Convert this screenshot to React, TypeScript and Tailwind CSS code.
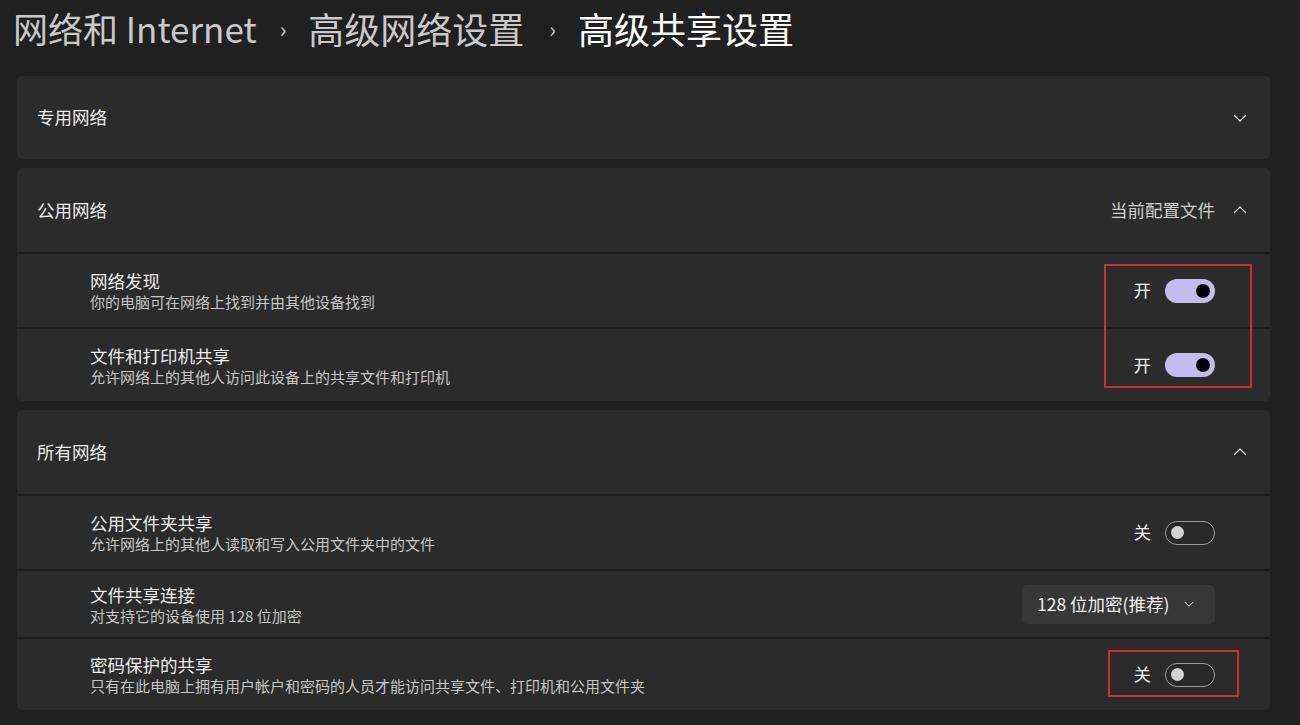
import React from "react";

const font = { fontFamily: '"Noto Sans CJK SC", "Noto Sans", sans-serif' };

function Chevron({ up = false, small = false }: { up?: boolean; small?: boolean }) {
  const s = small ? 12 : 16;
  return (
    <svg width={s} height={s} viewBox="0 0 16 16" fill="none" className="text-[#e8e8e8]">
      <path
        d={up ? "M2.5 10.5 L8 5 L13.5 10.5" : "M2.5 5.5 L8 11 L13.5 5.5"}
        stroke="currentColor"
        strokeWidth={small ? 1.3 : 1.2}
        strokeLinecap="round"
        strokeLinejoin="round"
      />
    </svg>
  );
}

function Toggle({ on }: { on: boolean }) {
  return (
    <div className="flex items-center gap-[14px]">
      <span className="text-[17.5px] text-[#f0f0f0]">{on ? "开" : "关"}</span>
      {on ? (
        <div className="w-[50px] h-[24px] rounded-full bg-[#c4bcee] flex items-center justify-end pr-[5px]">
          <div className="w-[14px] h-[14px] rounded-full bg-black" />
        </div>
      ) : (
        <div className="w-[50px] h-[24px] rounded-full border border-[#9c9c9c] bg-[#272727] flex items-center pl-[5px]">
          <div className="w-[13px] h-[13px] rounded-full bg-[#d2d2d2]" />
        </div>
      )}
    </div>
  );
}

function Header({ title, right, up }: { title: string; right?: string; up?: boolean }) {
  return (
    <div className="h-[84px] bg-[#2b2b2b] flex items-center justify-between pl-[20px] pr-[22px]">
      <span className="text-[17.5px] text-[#ececec]">{title}</span>
      <div className="flex items-center gap-[17px]">
        {right && <span className="text-[17.5px] text-[#cfcfcf]">{right}</span>}
        <Chevron up={up} />
      </div>
    </div>
  );
}

function Row({
  title,
  desc,
  h,
  children,
}: {
  title: string;
  desc: string;
  h: string;
  children: React.ReactNode;
}) {
  return (
    <div className={`${h} bg-[#2b2b2b] flex items-center justify-between pl-[73px] pr-[55px]`}>
      <div className="flex flex-col">
        <span className="text-[17.5px] leading-[22px] text-[#ececec]">{title}</span>
        <span className="text-[15px] leading-[19px] text-[#c6c6c6]">{desc}</span>
      </div>
      {children}
    </div>
  );
}

export default function App() {
  return (
    <div className="relative w-[1300px] h-[725px] overflow-hidden bg-[#202020]" style={font}>
      {/* Breadcrumb */}
      <div className="h-[76px] flex items-start pt-[5px] pl-[13px]">
        <div className="flex items-center leading-[46px]">
          <span className="text-[35px] text-[#c9c9c9]">网络和 Internet</span>
          <span className="ml-[23px] mr-[22px] text-[22px] text-[#c9c9c9]">›</span>
          <span className="text-[36px] text-[#c9c9c9]">高级网络设置</span>
          <span className="ml-[25px] mr-[22px] text-[22px] text-[#c9c9c9]">›</span>
          <span className="text-[36px] text-white">高级共享设置</span>
        </div>
      </div>

      <div className="flex flex-col gap-[9px] pl-[17px] pr-[30px]">
        <div className="rounded-[5px] overflow-hidden">
          <div className="h-[83px] bg-[#2b2b2b] flex items-center justify-between pl-[20px] pr-[22px]">
            <span className="text-[17.5px] text-[#ececec]">专用网络</span>
            <Chevron />
          </div>
        </div>

        <div className="rounded-[5px] overflow-hidden flex flex-col gap-[2px] bg-[#1c1c1c]">
          <Header title="公用网络" right="当前配置文件" up />
          <Row title="网络发现" desc="你的电脑可在网络上找到并由其他设备找到" h="h-[73px]">
            <Toggle on />
          </Row>
          <Row title="文件和打印机共享" desc="允许网络上的其他人访问此设备上的共享文件和打印机" h="h-[72px]">
            <Toggle on />
          </Row>
        </div>

        <div className="rounded-[5px] overflow-hidden flex flex-col gap-[2px] bg-[#1c1c1c]">
          <Header title="所有网络" up />
          <Row title="公用文件夹共享" desc="允许网络上的其他人读取和写入公用文件夹中的文件" h="h-[73px]">
            <Toggle on={false} />
          </Row>
          <Row title="文件共享连接" desc="对支持它的设备使用 128 位加密" h="h-[66px]">
            <div className="w-[193px] h-[39px] rounded-[5px] bg-[#373737] flex items-center justify-between pl-[15px] pr-[20px]">
              <span className="text-[17.5px] text-[#f0f0f0]">128 位加密(推荐)</span>
              <Chevron small />
            </div>
          </Row>
          <Row title="密码保护的共享" desc="只有在此电脑上拥有用户帐户和密码的人员才能访问共享文件、打印机和公用文件夹" h="h-[71px]">
            <Toggle on={false} />
          </Row>
        </div>
      </div>

      {/* Annotation boxes */}
      <div className="absolute left-[1104px] top-[264px] w-[148px] h-[124px] border-2 border-[#c7303a]" />
      <div className="absolute left-[1108px] top-[650px] w-[131px] h-[47px] border-2 border-[#c7303a]" />
    </div>
  );
}
